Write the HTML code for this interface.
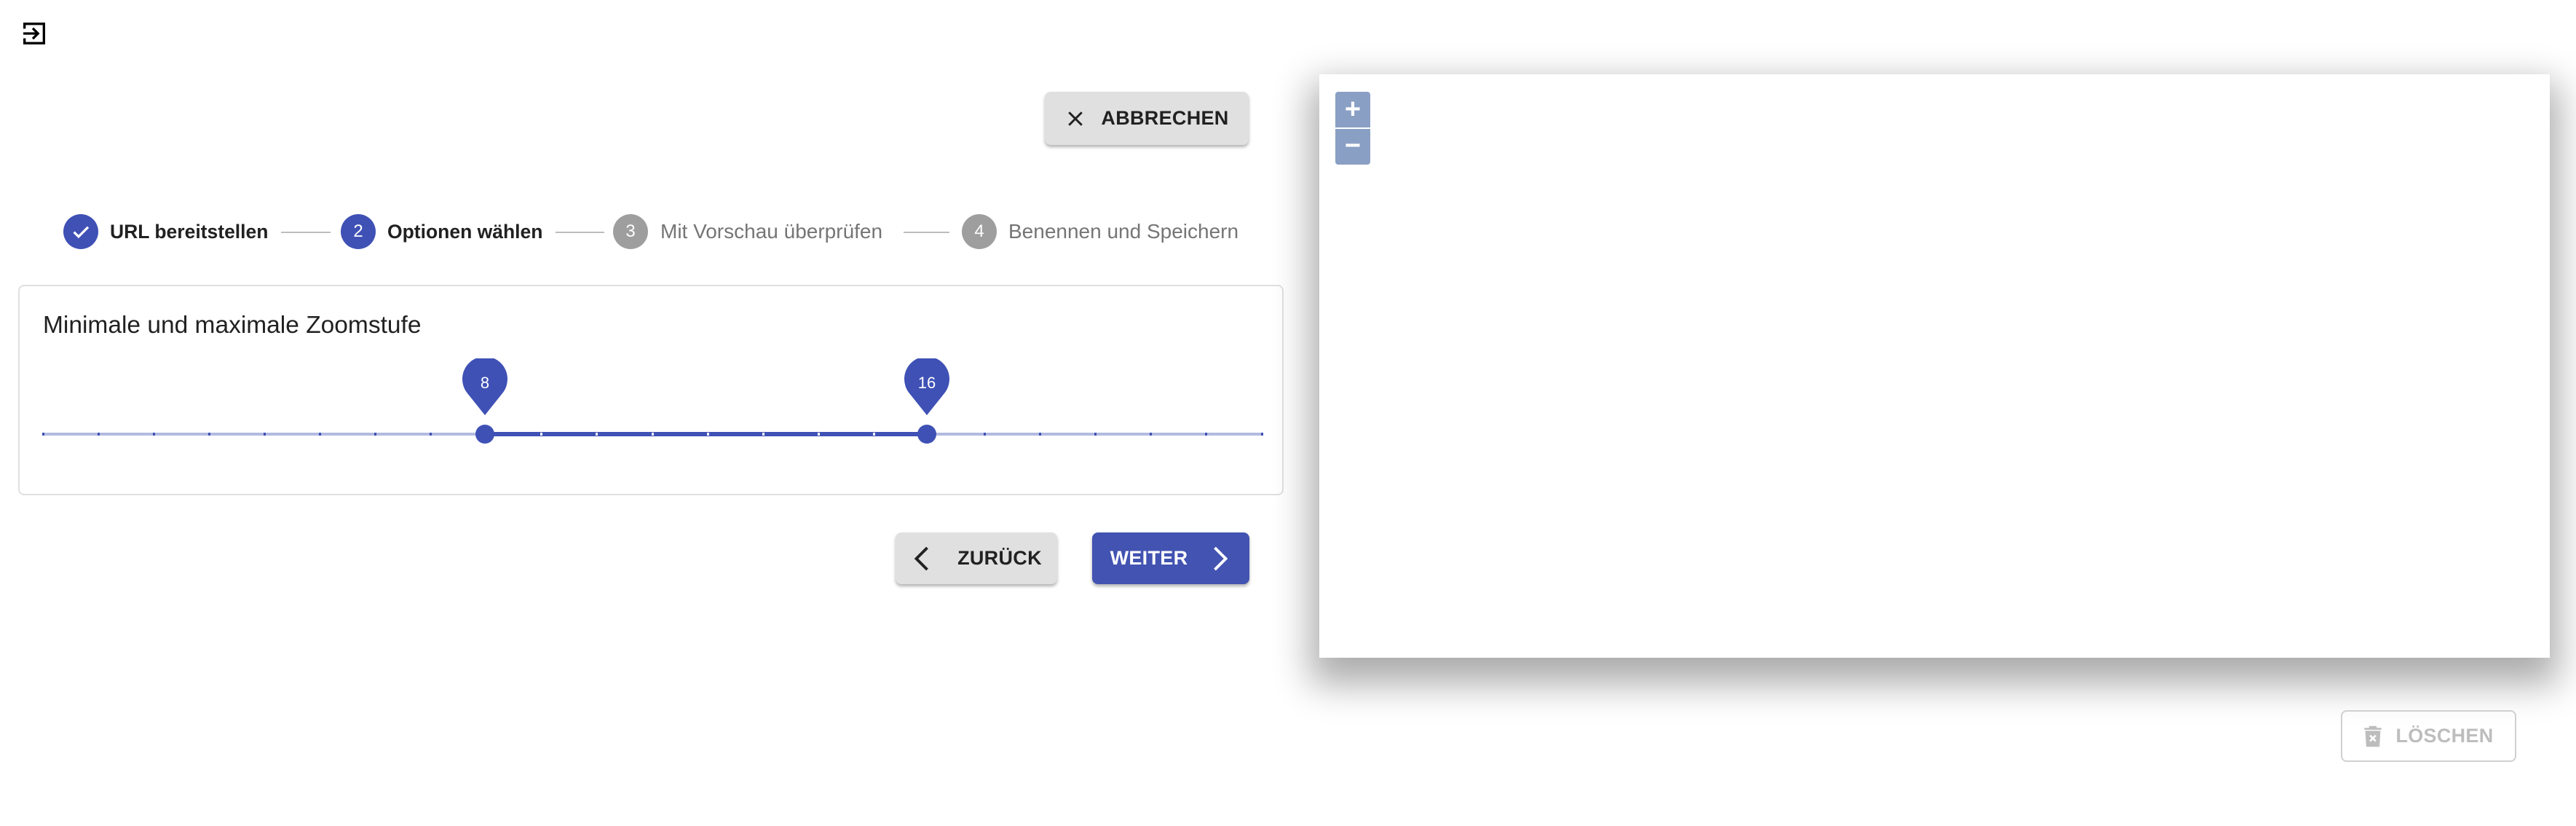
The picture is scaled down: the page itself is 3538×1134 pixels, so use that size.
<!DOCTYPE html>
<html><head><meta charset="utf-8"><style>
*{box-sizing:border-box;margin:0;padding:0}
body{width:3538px;height:1134px;background:#fff;font-family:"Liberation Sans",Arial,sans-serif;position:relative;overflow:hidden;color:#212121}
.abs{position:absolute}
.btn{position:absolute;border-radius:8px;display:flex;align-items:center;justify-content:center;font-weight:bold;font-size:27px;letter-spacing:0.3px}
.circ{position:absolute;width:48px;height:48px;border-radius:50%;color:#fff;font-size:24px;display:flex;align-items:center;justify-content:center;top:294px}
.lbl{position:absolute;top:300px;font-size:28px;line-height:36px}
.ln{position:absolute;top:318px;height:2px;background:#bdbdbd}
.tick{position:absolute;top:594px;width:3px;height:4px;background:#3f51b5}
</style></head><body>
<svg class="abs" style="left:27px;top:26px" width="40" height="40" viewBox="0 0 24 24"><path d="M3 3h18v18H3v-5h2v3h14V5H5v3H3z M10.1 15.6l1.4 1.4 5-5-5-5-1.4 1.4 2.6 2.6H3v2h9.7z" fill="#000"/></svg>

<div class="btn" style="left:1435px;top:126px;width:280px;height:73px;background:#e0e0e0;box-shadow:0 3px 4px rgba(0,0,0,.3);color:#212121">
<svg width="30" height="30" viewBox="0 0 24 24" style="margin-right:20px"><path d="M5 5L19 19M19 5L5 19" stroke="#212121" stroke-width="2.4"/></svg>ABBRECHEN</div>

<div class="circ" style="left:87px;background:#3f51b5"><svg width="30" height="30" viewBox="0 0 24 24"><path d="M4.5 12.5l5 5L20 7" stroke="#fff" stroke-width="2.6" fill="none"/></svg></div>
<div class="lbl" style="left:151px;font-weight:bold;font-size:26.5px">URL bereitstellen</div>
<div class="ln" style="left:386px;width:68px"></div>
<div class="circ" style="left:468px;background:#3f51b5">2</div>
<div class="lbl" style="left:532px;font-weight:bold;font-size:26.5px">Optionen wählen</div>
<div class="ln" style="left:763px;width:67px"></div>
<div class="circ" style="left:842px;background:#9e9e9e">3</div>
<div class="lbl" style="left:907px;color:#757575">Mit Vorschau überprüfen</div>
<div class="ln" style="left:1241px;width:63px"></div>
<div class="circ" style="left:1321px;background:#9e9e9e">4</div>
<div class="lbl" style="left:1385px;color:#757575">Benennen und Speichern</div>

<div class="abs" style="left:25px;top:391px;width:1738px;height:289px;border:2px solid #e0e0e0;border-radius:8px"></div>
<div class="abs" style="left:59px;top:428px;font-size:33.5px">Minimale und maximale Zoomstufe</div>
<div class="abs" style="left:59px;top:594px;width:1674px;height:4px;background:#b2bae0"></div>
<div class="abs" style="left:666px;top:593px;width:607px;height:6px;background:#3f51b5"></div>
<div id="ticks"></div>
<script>
var h='';for(var i=0;i<=22;i++){var x=59+i*1674/22;h+='<div class="tick" style="left:'+(x-1.5)+'px;'+((i>8&&i<16)?'background:#fff':'')+'"></div>';}
document.getElementById('ticks').innerHTML=h;
</script>
<div class="abs" style="left:653px;top:583px;width:26px;height:26px;border-radius:50%;background:#3f51b5"></div>
<div class="abs" style="left:1260px;top:583px;width:26px;height:26px;border-radius:50%;background:#3f51b5"></div>
<svg class="abs" style="left:634px;top:492px" width="64" height="80" viewBox="0 0 64 80"><path d="M32 78L8 48A31 31 0 1 1 56 48Z" fill="#3f51b5"/><text x="32" y="41" fill="#fff" font-size="22" text-anchor="middle" font-family="Liberation Sans">8</text></svg>
<svg class="abs" style="left:1241px;top:492px" width="64" height="80" viewBox="0 0 64 80"><path d="M32 78L8 48A31 31 0 1 1 56 48Z" fill="#3f51b5"/><text x="32" y="41" fill="#fff" font-size="22" text-anchor="middle" font-family="Liberation Sans">16</text></svg>

<div class="btn" style="left:1230px;top:731px;width:222px;height:71px;background:#e0e0e0;box-shadow:0 3px 4px rgba(0,0,0,.3);color:#212121">
<svg width="30" height="36" viewBox="0 0 20 24" style="margin-right:34px"><path d="M15 2L5 12l10 10" stroke="#212121" stroke-width="2.6" fill="none"/></svg>ZURÜCK</div>
<div class="btn" style="left:1500px;top:731px;width:216px;height:71px;background:#4253b1;box-shadow:0 3px 4px rgba(0,0,0,.3);color:#fff">WEITER
<svg width="30" height="36" viewBox="0 0 20 24" style="margin-left:30px"><path d="M5 2l10 10L5 22" stroke="#fff" stroke-width="2.6" fill="none"/></svg></div>

<div class="abs" style="left:1812px;top:102px;width:1690px;height:801px;background:#fff;box-shadow:0 24px 48px 12px rgba(0,0,0,.33)"></div>
<div class="abs" style="left:1834px;top:126px;width:48px;height:49px;background:#8a9fc4;border-radius:4px 4px 0 0;color:#fff;font-size:38px;font-weight:bold;text-align:center;line-height:48px">+</div>
<div class="abs" style="left:1834px;top:177px;width:48px;height:49px;background:#8a9fc4;border-radius:0 0 4px 4px;color:#fff;font-size:38px;font-weight:bold;text-align:center;line-height:46px">−</div>

<div class="btn" style="left:3215px;top:975px;width:241px;height:71px;border:2px solid #d0d0d0;color:#bdbdbd;font-weight:bold">
<svg width="26" height="32" viewBox="0 0 20 24" style="margin-right:18px"><path d="M6 1h8v2h5v2H1V3h5z M2 6h16l-1 17H3z" fill="#bdbdbd"/><path d="M7 11l6 6M13 11l-6 6" stroke="#fff" stroke-width="2"/></svg>LÖSCHEN</div>
</body></html>
